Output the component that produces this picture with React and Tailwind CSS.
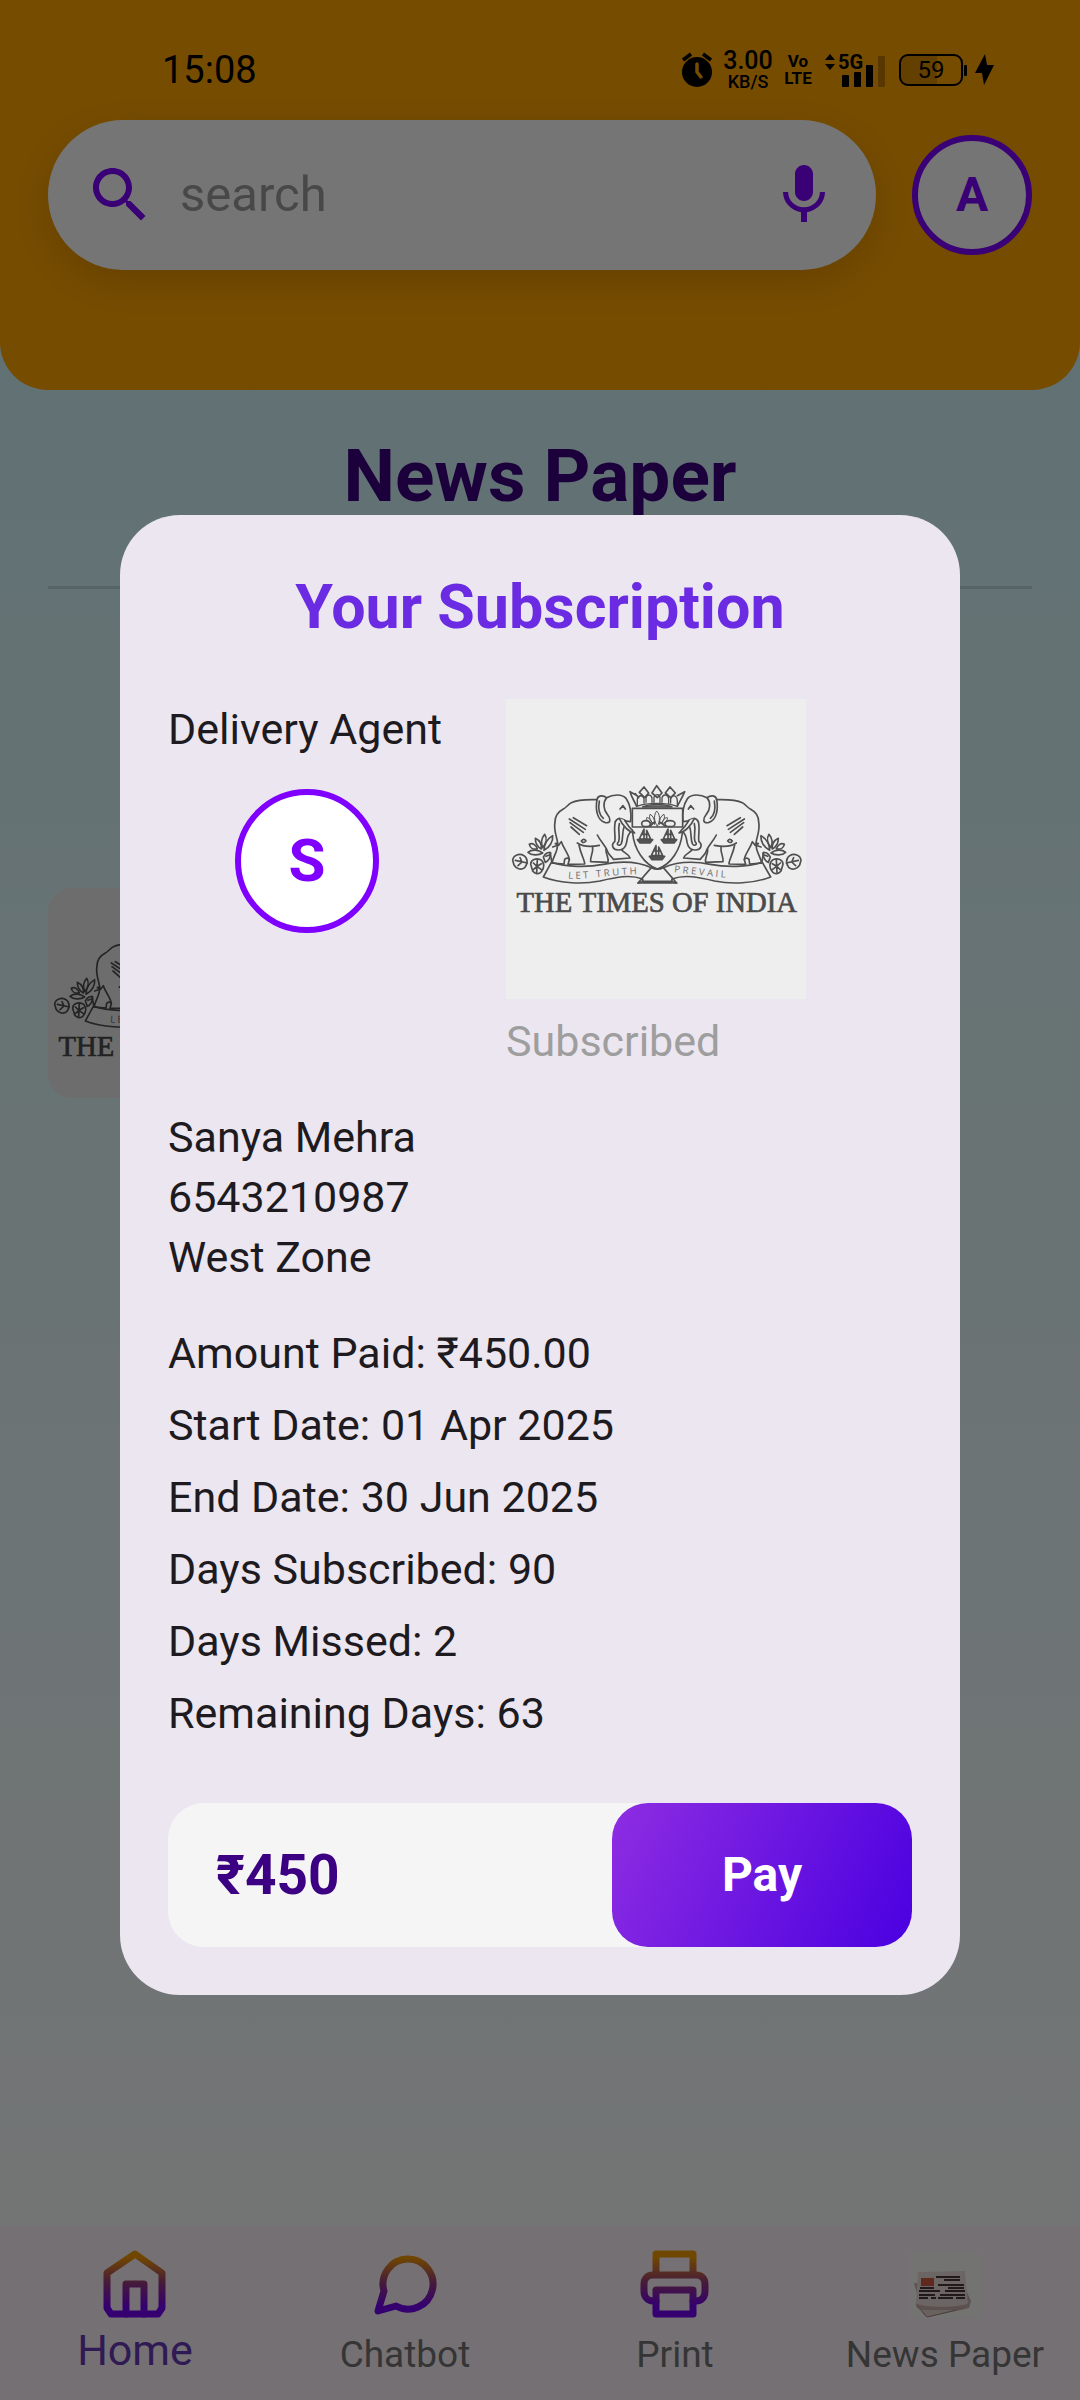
import React from "react";

const details = [
  "Amount Paid: ₹450.00",
  "Start Date: 01 Apr 2025",
  "End Date: 30 Jun 2025",
  "Days Subscribed: 90",
  "Days Missed: 2",
  "Remaining Days: 63",
];

function Elephant() {
  return (
    <g>
      {/* back, tail and hind legs */}
      <path d="M322 358 C290 357 262 358 244 367 C232 375 228 382 220 386 C203 395 195 410 195 425 C190 450 200 465 203 488 L196 490 L206 494 L214 484 C222 508 236 520 238 538 L234 552 L284 551 C285 540 272 522 267 494" />
      <path d="M203 490 C204 512 190 528 186 548 L222 551 L224 537 C228 532 236 532 238 538" />
      {/* belly and front legs */}
      <path d="M262 488 C280 500 305 500 328 495" />
      <path d="M308 499 C310 520 300 528 302 544 L354 546 C358 534 346 520 348 506" />
      <path d="M322 464 C332 484 348 498 352 512 C356 526 366 528 370 537 L420 533 C416 520 402 518 396 510" />
      {/* ear, head, eye */}
      <path d="M350 352 C338 343 324 345 321 357 C316 385 320 420 346 427 C366 430 360 412 352 402 C340 388 338 366 350 352 Z" />
      <path d="M328 362 C324 384 328 404 340 414" />
      <path d="M350 352 C368 342 396 340 408 354 C420 372 425 396 422 424 C410 424 402 420 396 416 C388 412 380 416 376 424" />
      <path d="M390 386 L399 376 L406 386" />
      {/* trunk and tusks */}
      <path d="M376 424 C370 448 378 470 374 484 C362 494 368 510 386 509 C408 508 410 488 412 474 C414 462 420 458 426 448" />
      <path d="M388 430 C382 452 392 466 386 484 C376 492 388 500 394 490 C400 474 396 456 402 440" />
      <path d="M388 414 C398 438 418 456 434 458 C424 448 412 434 404 420" fill="#eeeeee" />
      {/* skin folds */}
      <path d="M250 412 L290 436 M238 416 L286 447 M240 427 L280 456 M243 440 L268 462 M274 482 Q282 472 288 482 Q280 490 276 484" />
    </g>
  );
}

function Plant() {
  return (
    <g>
      <path d="M68 540 C70 524 88 518 102 526 C114 534 114 550 104 562 C92 572 78 564 72 554 Z" />
      <path d="M76 540 L112 548 M90 532 L96 545 M84 556 L96 545" />
      <path d="M122 552 C122 538 138 532 152 538 C164 546 164 562 154 574 C146 584 134 580 128 572 Z" />
      <path d="M142 538 L140 576 M130 548 L141 558 L154 550 M130 568 L141 558 L154 568" />
      <path d="M114 516 C126 506 146 508 158 518 C146 526 124 526 114 516 Z" />
      <path d="M118 492 C128 486 140 496 142 506 C130 508 120 502 118 492 Z" />
      <path d="M136 474 C150 480 156 494 154 506 C142 500 136 488 136 474 Z" />
      <path d="M164 462 C172 474 168 490 158 502 C152 488 156 472 164 462 Z" />
      <path d="M188 466 C190 484 178 502 162 510 C162 492 172 476 188 466 Z" />
      <path d="M160 530 C166 518 176 514 182 518 C182 532 174 544 166 546 Z M168 528 L178 524" />
      <path d="M188 500 L206 494 M180 516 L186 548" />
    </g>
  );
}

function Ship({ x, y }) {
  return (
    <g transform={`translate(${x} ${y})`}>
      <path d="M-4 -26 V8 M-4 -26 L-18 4 H16 L4 -22 M-12 -10 H10 M4 -22 V6" />
      <path d="M-24 6 H22 L14 16 H-16 Z" fill="#555" />
    </g>
  );
}

function TimesCrest({ className, id }) {
  return (
    <svg viewBox="48 56 900 900" className={className} role="img" aria-label="The Times of India">
      <rect x="48" y="56" width="900" height="900" fill="#eeeeee" />
      <g fill="none" stroke="#4f4f4f" strokeWidth="5" strokeLinejoin="round" strokeLinecap="round">
        <Elephant />
        <Plant />
        <g transform="translate(1001 0) scale(-1 1)">
          <Elephant />
          <Plant />
        </g>
        {/* shield */}
        <path d="M427 384 H578 M427 440 H578 M427 384 V440 M578 384 V440 M428 458 C432 506 462 552 502 566 C545 552 572 506 577 458" />
        {/* crown */}
        <path d="M440 378 C432 360 424 350 420 334 L442 346 M562 346 L584 334 C578 350 570 362 562 378 M436 340 L446 352 M448 336 L462 320 L476 338 L464 352 Z M486 338 L500 316 L516 338 L502 352 Z M526 338 L540 320 L556 338 L542 352 Z" />
        <path d="M440 378 C470 366 532 366 562 378 M442 374 V356 C446 342 460 344 462 356 V368 M468 366 V352 C472 340 484 342 486 354 V366 M492 366 V350 C496 340 508 340 510 352 V366 M516 366 V352 C520 340 534 342 536 354 V368 M542 368 V356 C546 342 560 344 562 360 V374" strokeWidth="4" />
        <path d="M458 380 C480 370 524 370 546 380 Z" fill="#888" />
        {/* lotus */}
        <path d="M502 438 C490 420 492 402 500 392 C510 402 512 420 502 438 M494 432 C480 424 476 410 480 402 C490 406 494 418 494 430 M508 432 C522 424 526 410 522 402 C512 406 508 418 508 430 M484 430 C474 426 468 418 470 412 C480 412 484 422 486 430 M518 430 C528 426 534 418 532 412 C522 412 518 422 516 430" strokeWidth="3" />
        <ellipse cx="468" cy="430" rx="13" ry="9" />
        <ellipse cx="540" cy="430" rx="15" ry="9" />
        <path d="M480 438 L492 426 M526 438 L512 426" />
        <Ship x={466} y={472} />
        <Ship x={538} y={472} />
        <Ship x={502} y={522} />
        {/* ribbon */}
        <path d="M184 546 C230 560 290 562 340 552 C390 542 440 542 484 562 L444 608 C458 606 460 600 458 596 C420 582 380 590 330 602 C280 612 210 610 160 590 Z" />
        <path d="M817 546 C771 560 711 562 661 552 C611 542 566 542 520 562 L560 608 C546 606 544 600 546 596 C584 582 624 590 674 602 C724 612 791 610 842 590 Z" />
        <path d="M458 603 H546 M444 608 H560 M484 562 C496 568 508 568 520 562" />
      </g>
      <path id={`${id}-left`} d="M234 594 C290 600 350 582 480 580" fill="none" />
      <path id={`${id}-right`} d="M552 576 C620 582 680 594 780 594" fill="none" />
      <g fill="#6d6d6d" fontSize="29" fontFamily="'Open Sans', sans-serif">
        <text>
          <textPath href={`#${id}-left`}>{"L\u00a0E\u00a0T\u00a0\u00a0\u00a0T\u00a0R\u00a0U\u00a0T\u00a0H"}</textPath>
        </text>
        <text>
          <textPath href={`#${id}-right`}>{"P\u00a0R\u00a0E\u00a0V\u00a0A\u00a0I\u00a0L"}</textPath>
        </text>
      </g>
      <text x="500" y="694" textAnchor="middle" fill="#4a4a4a" stroke="#4a4a4a" strokeWidth="2" fontSize="86" fontFamily="'Liberation Serif', serif">
        THE TIMES OF INDIA
      </text>
    </svg>
  );
}

function StatusBar() {
  return (
    <div className="flex h-[60px] items-center justify-between pr-[86px] pl-[162px] text-black">
      <span className="text-[38px] leading-[60px]">15:08</span>
      <div className="flex items-center">
        <svg className="h-[36px] w-[32px]" viewBox="0 0 32 36" aria-hidden="true">
          <circle cx="16" cy="20" r="15" />
          <path d="M2 8 L10 2 M22 2 L30 8" stroke="#000" strokeWidth="3.5" />
          <path d="M16 12 V20 L20 25" stroke="#ffa500" strokeWidth="3.5" fill="none" strokeLinecap="round" />
        </svg>
        <div className="ml-2 flex w-[54px] flex-col items-center font-medium">
          <span className="text-[25px] leading-[24px]">3.00</span>
          <span className="text-[18px] leading-[18px]">KB/S</span>
        </div>
        <div className="ml-2 flex w-[30px] flex-col items-center text-[17px] leading-[17px] font-bold">
          <span>Vo</span>
          <span>LTE</span>
        </div>
        <svg className="ml-3 h-[44px] w-[62px]" viewBox="0 -4 62 44" aria-hidden="true">
          <path d="M0 8 L5 2 L10 8 Z M0 12 L5 18 L10 12 Z" />
          <rect x="17" y="23" width="7" height="12" rx="1" />
          <rect x="29" y="20" width="7" height="15" rx="1" />
          <rect x="41" y="13" width="7" height="22" rx="1" />
          <rect x="53" y="4" width="7" height="31" rx="1" opacity="0.25" />
          <text x="13" y="17" fontSize="20" fontWeight="700" fontFamily="Roboto, sans-serif">5G</text>
        </svg>
        <div className="ml-3 flex h-[32px] w-[64px] items-center justify-center rounded-[9px] border-2 border-black bg-linear-to-r from-black/15 from-60% to-transparent to-60% text-[24px] leading-[28px]">
          59
        </div>
        <svg className="h-[32px] w-[31px]" viewBox="0 0 31 32" aria-hidden="true">
          <rect x="1" y="11" width="3" height="11" rx="1" />
          <path d="M22 0 L12 19 H19 L21 31 L31 11 H24 Z" />
        </svg>
      </div>
    </div>
  );
}

function SearchIcon() {
  return (
    <svg className="size-[72px] shrink-0" viewBox="0 0 24 24" fill="#7f00ff" aria-hidden="true">
      <path d="M15.5 14h-.79l-.28-.27C15.41 12.59 16 11.11 16 9.5 16 5.91 13.09 3 9.5 3S3 5.91 3 9.5 5.91 16 9.5 16c1.61 0 3.09-.59 4.23-1.57l.27.28v.79l5 4.99L20.49 19l-4.99-5zm-6 0C7.01 14 5 11.99 5 9.5S7.01 5 9.5 5 14 7.01 14 9.5 11.99 14 9.5 14z" />
    </svg>
  );
}

function MicIcon() {
  return (
    <svg className="size-[72px]" viewBox="0 0 24 24" fill="#7f00ff" aria-hidden="true">
      <path d="M12 14c1.66 0 2.99-1.34 2.99-3L15 5c0-1.66-1.34-3-3-3S9 3.34 9 5v6c0 1.66 1.34 3 3 3zm5.3-3c0 3-2.54 5.1-5.3 5.1S6.7 14 6.7 11H5c0 3.41 2.72 6.23 6 6.72V21h2v-3.28c3.28-.48 6-3.3 6-6.72h-1.7z" />
    </svg>
  );
}

function GradientIcon({ id, children }) {
  return (
    <svg className="size-[72px]" viewBox="0 0 72 72" fill="none" stroke={`url(#${id})`} strokeWidth="7" strokeLinejoin="round" strokeLinecap="round" aria-hidden="true">
      <defs>
        <linearGradient id={id} gradientUnits="userSpaceOnUse" x1="0" y1="4" x2="0" y2="66">
          <stop offset="0.08" stopColor="#f59c00" />
          <stop offset="0.5" stopColor="#983a80" />
          <stop offset="0.88" stopColor="#7300f5" />
        </linearGradient>
      </defs>
      {children}
    </svg>
  );
}

function NewspaperIcon() {
  return (
    <svg className="size-[72px]" viewBox="0 0 72 72" aria-hidden="true">
      <rect y="4" width="72" height="66" fill="#fbfdf9" />
      <path d="M5 35 L14 66 L19 69 L60 60 L62 53 L56 40 Z" fill="#c9b2ae" />
      <path d="M10 60 L18 69 L56 60" fill="#e8d5d0" stroke="#a08680" strokeWidth="1" />
      <path d="M9 24 L56 23 L59 56 C58 60 54 61 50 61 H13 C8 61 6 58 7 54 Z" fill="#eadddb" />
      <path d="M7 55 C10 60 54 60 59 55 C59 60 54 62 50 62 H13 C9 62 7 59 7 55 Z" fill="#c7b0ac" />
      <rect x="12" y="30" width="13" height="8" fill="#cf5b45" />
      <path d="M27 29 H51 M35 32 H51 M29 37 H55 M11 40 H25 M39 40 H55 M10 43 H31 M36 43 H56 M10 47 H26 M31 47 H56 M10 50 H19 M22 50 H27 M29 50 H44 M47 50 H56" stroke="#4a3a3a" strokeWidth="2" />
    </svg>
  );
}

function Avatar({ letter, className }) {
  return (
    <span className={`flex shrink-0 items-center justify-center rounded-full border-6 border-[#7f00ff] bg-white font-bold text-[#7f00ff] ${className}`}>
      {letter}
    </span>
  );
}

function NavItem({ label, active, children }) {
  return (
    <a href="#" className={`flex flex-1 flex-col items-center pt-[22px] whitespace-nowrap ${active ? "text-[43px] text-[#673ab7]" : "text-[37px] text-[#757575]"}`}>
      {children}
      <span className={active ? "leading-[60px]" : "leading-[70px]"}>{label}</span>
    </a>
  );
}

function SubscriptionDialog() {
  return (
    <section
      role="dialog"
      aria-modal="true"
      aria-labelledby="dialog-title"
      className="w-full max-w-[840px] rounded-[60px] bg-[#ece6f0] p-12 text-[43px] leading-[60px] text-[#1d1b20]"
    >
      <h2 id="dialog-title" className="text-center text-[61px] leading-[88px] font-bold text-[#6a2be2]">
        Your Subscription
      </h2>
      <div className="mt-12 flex gap-[60px]">
        <div className="flex min-w-[278px] flex-col items-center gap-[30px]">
          <p className="self-start">Delivery Agent</p>
          <Avatar letter="S" className="size-[144px] text-[60px]" />
        </div>
        <div>
          <TimesCrest id="crest" className="size-[300px]" />
          <p className="mt-3 text-[#9e9e9e]">Subscribed</p>
        </div>
      </div>
      <address className="mt-9 not-italic">
        <p>Sanya Mehra</p>
        <p>6543210987</p>
        <p>West Zone</p>
      </address>
      <ul className="mt-9 flex flex-col gap-3">
        {details.map((line) => (
          <li key={line}>{line}</li>
        ))}
      </ul>
      <div className="mt-[60px] flex h-[144px] items-center justify-between rounded-[36px] bg-[#f5f5f5] pl-12">
        <span className="text-[55px] font-bold text-[#3c0082]">₹450</span>
        <button
          type="button"
          className="h-full w-[300px] rounded-[36px] bg-[linear-gradient(116deg,#8e2de2,#4a00e0)] text-[48px] font-bold text-white"
        >
          Pay
        </button>
      </div>
    </section>
  );
}

export default function App() {
  return (
    <div className="flex min-h-screen flex-col bg-linear-to-b from-[#cbf6fb] to-white font-[Roboto,sans-serif]">
      <header className="rounded-b-[48px] bg-[#ffa500] pt-10 pb-[120px]">
        <StatusBar />
        <div className="mt-5 flex items-center gap-9 px-12">
          <div className="flex h-[150px] min-w-0 flex-1 items-center gap-6 rounded-full bg-white px-9 shadow-[0_12px_36px_rgba(0,0,0,0.12)]">
            <SearchIcon />
            <input
              type="search"
              aria-label="Search"
              placeholder="search"
              className="w-full min-w-0 flex-1 bg-transparent text-[49px] outline-none placeholder:text-[#9e9e9e]"
            />
            <button type="button" aria-label="Voice search">
              <MicIcon />
            </button>
          </div>
          <Avatar letter="A" className="size-[120px] text-[48px]" />
        </div>
      </header>

      <main className="flex-1 px-12">
        <h1 className="mt-9 text-center text-[73px] leading-[100px] font-bold text-[#3c0082]">News Paper</h1>
        <hr className="mt-[60px] border-t-3 border-black/12" />
        <div className="mt-[299px] flex h-[210px] w-[300px] items-center overflow-hidden rounded-3xl">
          <TimesCrest id="thumb" className="size-[300px] shrink-0" />
        </div>
      </main>

      <nav className="flex h-[174px] bg-[#fff5fd]">
        <NavItem label="Home" active>
          <GradientIcon id="home-gradient">
            <path d="M8 25 L36 6 L63 25 V60 L59 66 H12 L8 60 Z" />
            <path d="M27 66 V36 H45 V66" />
          </GradientIcon>
        </NavItem>
        <NavItem label="Chatbot">
          <GradientIcon id="chat-gradient">
            <path d="M15 43 A25 25 0 1 1 27 58 L9 63 Z" />
          </GradientIcon>
        </NavItem>
        <NavItem label="Print">
          <GradientIcon id="print-gradient">
            <path d="M17 26 V6 H54 V26" />
            <path d="M17 53 H14 C8 53 5 48 5 43 V36 C5 30 9 27 14 27 H57 C63 27 66 31 66 36 V43 C66 49 63 53 57 53 H54" />
            <path d="M17 42 H54 V66 H17 Z" />
          </GradientIcon>
        </NavItem>
        <NavItem label="News Paper">
          <NewspaperIcon />
        </NavItem>
      </nav>

      <div className="fixed inset-0 flex items-center justify-center bg-black/54 px-[120px] pt-[110px]">
        <SubscriptionDialog />
      </div>
    </div>
  );
}
